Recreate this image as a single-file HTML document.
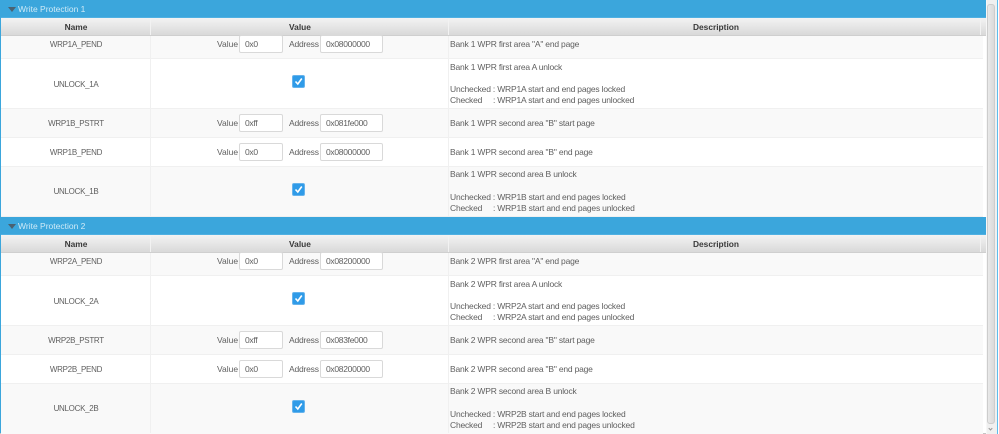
<!DOCTYPE html>
<html>
<head>
<meta charset="utf-8">
<style>
html,body{margin:0;padding:0;background:#fff}
#p{position:relative;width:999px;height:434px;overflow:hidden;background:#fff;font-family:"Liberation Sans",sans-serif;font-size:8.5px;color:#5f5f5f}
#p div{position:absolute;box-sizing:border-box}
.bar{left:1px;width:985px;height:18px;background:#3ba6dc;border-bottom:1px solid #4fb0e2}
.tri{left:8px;top:7px;width:0;height:0;border-left:4px solid transparent;border-right:4px solid transparent;border-top:5px solid #4a6272}
.bt{left:18px;top:1px;height:17px;line-height:17px;color:#cfeaf7;font-size:8.5px;white-space:nowrap}
.hd{left:1px;width:985px;height:18px;background:linear-gradient(#f3f3f3,#d9d9d9);border-bottom:1px solid #cfcfcf}
.hs{top:0;width:1px;height:17px;background:#c8c8c8;border-right:1px solid #f2f2f2;box-sizing:content-box}
.ht{top:0;height:17px;line-height:18px;text-align:center;font-weight:bold;color:#3a3a3a;font-size:8.4px}
.r{left:1px;width:982px}
.o{background:#f9f9f9}
.w{background:#fff}
.ln{left:1px;width:982px;height:1px;background:#f0f0f0}
.cs{width:1px;background:#f0f0f0;left:150px}
.n{left:2px;width:148px;height:12px;margin-top:1px;line-height:12px;text-align:center;white-space:nowrap;font-size:8px;letter-spacing:-.3px}
.lb{height:12px;line-height:12px;white-space:nowrap}
.a{letter-spacing:-.2px}
.in{height:18px;background:#fff;border:1px solid #d9d9d9;border-radius:2px;line-height:17px;padding-left:5px;white-space:nowrap;letter-spacing:-.3px}
.cb{left:292px;width:13px;height:13px;background:#2f9be8;border:1px solid #66b3ec;border-radius:2px}
.d{left:450px;height:12px;line-height:12px;white-space:pre;letter-spacing:-.2px}
</style>
</head>
<body>
<div id="p">
<div style="left:0;top:0;width:1.5px;height:434px;background:#3ba6dc"></div>
<div style="left:0;top:433px;width:997px;height:1px;background:#c4c4c4"></div>

<div style="left:986px;top:0;width:11px;height:434px;background:#f0f0f0;border-left:1px solid #f7f7f7"></div>
<div style="left:987px;top:4px;width:8px;height:420px;background:linear-gradient(90deg,#e9e9e9,#dadada);border:1px solid #cdcdcd;border-radius:3px"></div>
<div style="left:997px;top:0;width:1px;height:434px;background:#5dbcec"></div>
<div style="left:989px;top:427px;width:3px;height:3px;border-right:1px solid #999;border-bottom:1px solid #999;transform:rotate(45deg)"></div>

<!-- Section 1 -->
<div style="left:0;top:0;width:986px;height:217px">
<div class="r o" style="top:35px;height:24px"></div>
<div class="r w" style="top:59px;height:50px"></div>
<div class="r o" style="top:109px;height:29px"></div>
<div class="r w" style="top:138px;height:29px"></div>
<div class="r o" style="top:167px;height:50px"></div>
<div class="ln" style="top:58px"></div><div class="ln" style="top:108px"></div><div class="ln" style="top:137px"></div><div class="ln" style="top:166px"></div><div class="ln" style="top:216px"></div>
<div class="cs" style="top:35px;height:182px"></div>
<div class="cs" style="left:448px;top:35px;height:182px"></div>
<div class="bar" style="top:0"></div><div class="tri"></div><div class="bt">Write Protection 1</div>
<div class="hd" style="top:18px"><div class="hs" style="left:149px"></div><div class="hs" style="left:447px"></div><div class="hs" style="left:979px"></div>
<div class="ht" style="left:0;width:150px">Name</div><div class="ht" style="left:150px;width:298px">Value</div><div class="ht" style="left:449px;width:532px">Description</div></div>

<div class="n" style="top:38px">WRP1A_PEND</div>
<div class="lb" style="left:217px;top:38px">Value</div><div class="in" style="left:239px;top:35px;width:44px">0x0</div>
<div class="lb a" style="left:289px;top:38px">Address</div><div class="in" style="left:320px;top:35px;width:63px">0x08000000</div>
<div class="d" style="top:38px">Bank 1 WPR first area "A" end page</div>

<div class="n" style="top:78px">UNLOCK_1A</div>
<div class="cb" style="top:75px"><svg width="11" height="11" style="display:block"><path d="M2.5 5.5L4.8 8L8.8 2.5" fill="none" stroke="#fff" stroke-width="1.6"/></svg></div>
<div class="d" style="top:61px">Bank 1 WPR first area A unlock</div>
<div class="d" style="top:83px">Unchecked : WRP1A start and end pages locked</div>
<div class="d" style="top:94px">Checked     : WRP1A start and end pages unlocked</div>

<div class="n" style="top:117px">WRP1B_PSTRT</div>
<div class="lb" style="left:217px;top:117px">Value</div><div class="in" style="left:239px;top:114px;width:44px">0xff</div>
<div class="lb a" style="left:289px;top:117px">Address</div><div class="in" style="left:320px;top:114px;width:63px">0x081fe000</div>
<div class="d" style="top:117px">Bank 1 WPR second area "B" start page</div>

<div class="n" style="top:146px">WRP1B_PEND</div>
<div class="lb" style="left:217px;top:146px">Value</div><div class="in" style="left:239px;top:143px;width:44px">0x0</div>
<div class="lb a" style="left:289px;top:146px">Address</div><div class="in" style="left:320px;top:143px;width:63px">0x08000000</div>
<div class="d" style="top:146px">Bank 1 WPR second area "B" end page</div>

<div class="n" style="top:185px">UNLOCK_1B</div>
<div class="cb" style="top:183px"><svg width="11" height="11" style="display:block"><path d="M2.5 5.5L4.8 8L8.8 2.5" fill="none" stroke="#fff" stroke-width="1.6"/></svg></div>
<div class="d" style="top:168px">Bank 1 WPR second area B unlock</div>
<div class="d" style="top:191px">Unchecked : WRP1B start and end pages locked</div>
<div class="d" style="top:202px">Checked     : WRP1B start and end pages unlocked</div>
</div>

<!-- Section 2 -->
<div style="left:0;top:217px;width:986px;height:217px">
<div class="r o" style="top:35px;height:24px"></div>
<div class="r w" style="top:59px;height:50px"></div>
<div class="r o" style="top:109px;height:29px"></div>
<div class="r w" style="top:138px;height:29px"></div>
<div class="r o" style="top:167px;height:50px"></div>
<div class="ln" style="top:58px"></div><div class="ln" style="top:108px"></div><div class="ln" style="top:137px"></div><div class="ln" style="top:166px"></div>
<div class="cs" style="top:35px;height:181px"></div>
<div class="cs" style="left:448px;top:35px;height:181px"></div>
<div class="bar" style="top:0"></div><div class="tri"></div><div class="bt">Write Protection 2</div>
<div class="hd" style="top:18px"><div class="hs" style="left:149px"></div><div class="hs" style="left:447px"></div><div class="hs" style="left:979px"></div>
<div class="ht" style="left:0;width:150px">Name</div><div class="ht" style="left:150px;width:298px">Value</div><div class="ht" style="left:449px;width:532px">Description</div></div>

<div class="n" style="top:38px">WRP2A_PEND</div>
<div class="lb" style="left:217px;top:38px">Value</div><div class="in" style="left:239px;top:35px;width:44px">0x0</div>
<div class="lb a" style="left:289px;top:38px">Address</div><div class="in" style="left:320px;top:35px;width:63px">0x08200000</div>
<div class="d" style="top:38px">Bank 2 WPR first area "A" end page</div>

<div class="n" style="top:78px">UNLOCK_2A</div>
<div class="cb" style="top:75px"><svg width="11" height="11" style="display:block"><path d="M2.5 5.5L4.8 8L8.8 2.5" fill="none" stroke="#fff" stroke-width="1.6"/></svg></div>
<div class="d" style="top:61px">Bank 2 WPR first area A unlock</div>
<div class="d" style="top:83px">Unchecked : WRP2A start and end pages locked</div>
<div class="d" style="top:94px">Checked     : WRP2A start and end pages unlocked</div>

<div class="n" style="top:117px">WRP2B_PSTRT</div>
<div class="lb" style="left:217px;top:117px">Value</div><div class="in" style="left:239px;top:114px;width:44px">0xff</div>
<div class="lb a" style="left:289px;top:117px">Address</div><div class="in" style="left:320px;top:114px;width:63px">0x083fe000</div>
<div class="d" style="top:117px">Bank 2 WPR second area "B" start page</div>

<div class="n" style="top:146px">WRP2B_PEND</div>
<div class="lb" style="left:217px;top:146px">Value</div><div class="in" style="left:239px;top:143px;width:44px">0x0</div>
<div class="lb a" style="left:289px;top:146px">Address</div><div class="in" style="left:320px;top:143px;width:63px">0x08200000</div>
<div class="d" style="top:146px">Bank 2 WPR second area "B" end page</div>

<div class="n" style="top:185px">UNLOCK_2B</div>
<div class="cb" style="top:183px"><svg width="11" height="11" style="display:block"><path d="M2.5 5.5L4.8 8L8.8 2.5" fill="none" stroke="#fff" stroke-width="1.6"/></svg></div>
<div class="d" style="top:168px">Bank 2 WPR second area B unlock</div>
<div class="d" style="top:191px">Unchecked : WRP2B start and end pages locked</div>
<div class="d" style="top:202px">Checked     : WRP2B start and end pages unlocked</div>
</div>
</div>
</body>
</html>
